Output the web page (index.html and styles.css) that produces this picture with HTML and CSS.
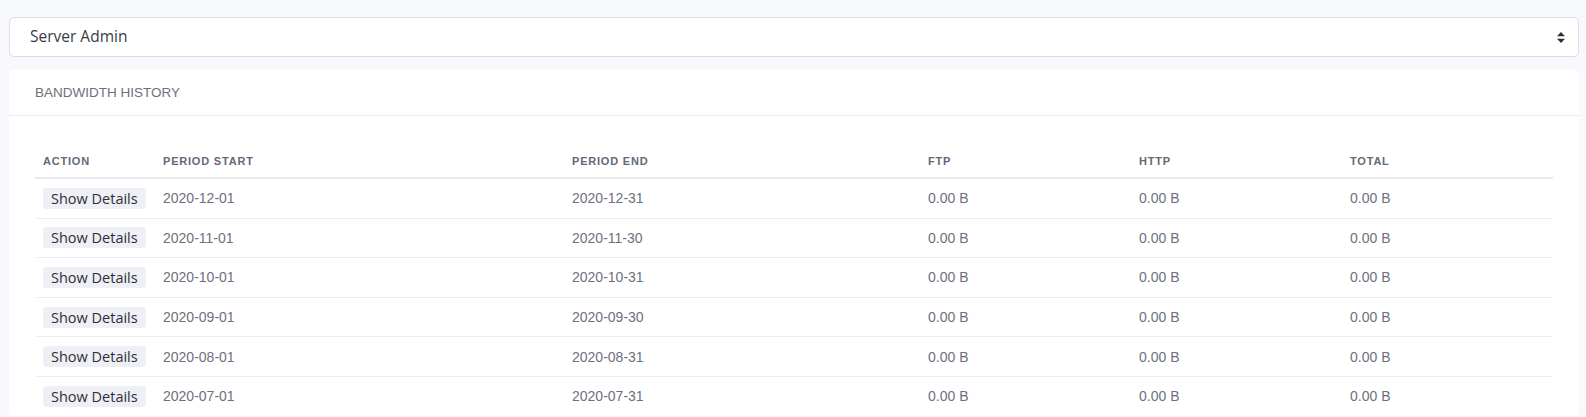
FILE: index.html
```html
<!DOCTYPE html>
<html>
<head>
<meta charset="utf-8">
<link rel="stylesheet" href="styles.css">
</head>
<body>
<div class="page">
  <div class="select">
    <span class="select-text">Server Admin</span>
    <svg class="select-arrow" width="8" height="11" viewBox="0 0 8 11"><path d="M4 0 L8 4.2 H0 Z M4 11 L8 6.8 H0 Z" fill="#2d2f36"/></svg>
  </div>
  <div class="card">
    <div class="card-header">BANDWIDTH HISTORY</div>
    <div class="card-body">
      <table class="table">
        <colgroup>
          <col class="c1"><col class="c2"><col class="c3"><col class="c4"><col class="c5"><col class="c6">
        </colgroup>
        <thead>
          <tr><th>Action</th><th>Period Start</th><th>Period End</th><th>FTP</th><th>HTTP</th><th>Total</th></tr>
        </thead>
        <tbody>
          <tr><td><span class="btn">Show Details</span></td><td>2020-12-01</td><td>2020-12-31</td><td>0.00 B</td><td>0.00 B</td><td>0.00 B</td></tr>
          <tr><td><span class="btn">Show Details</span></td><td>2020-11-01</td><td>2020-11-30</td><td>0.00 B</td><td>0.00 B</td><td>0.00 B</td></tr>
          <tr><td><span class="btn">Show Details</span></td><td>2020-10-01</td><td>2020-10-31</td><td>0.00 B</td><td>0.00 B</td><td>0.00 B</td></tr>
          <tr><td><span class="btn">Show Details</span></td><td>2020-09-01</td><td>2020-09-30</td><td>0.00 B</td><td>0.00 B</td><td>0.00 B</td></tr>
          <tr><td><span class="btn">Show Details</span></td><td>2020-08-01</td><td>2020-08-31</td><td>0.00 B</td><td>0.00 B</td><td>0.00 B</td></tr>
          <tr><td><span class="btn">Show Details</span></td><td>2020-07-01</td><td>2020-07-31</td><td>0.00 B</td><td>0.00 B</td><td>0.00 B</td></tr>
        </tbody>
      </table>
    </div>
  </div>
</div>
</body>
</html>
```
FILE: styles.css
```css
html, body {
  margin: 0;
  padding: 0;
  background: #f8f9fc;
  font-family: "Liberation Sans", Arial, sans-serif;
  overflow: hidden;
}
.page {
  padding: 17px 7px 0 9px;
}
.select {
  height: 38px;
  border: 1px solid #dcdee6;
  border-radius: 5px;
  background: #fff;
  display: flex;
  align-items: center;
  justify-content: space-between;
  padding: 0 13px 0 20px;
}
.select-text {
  font-family: "Open Sans", sans-serif;
  font-size: 15.5px;
  color: #3a3b45;
  margin-top: -2px;
}
.select-arrow {
  display: block;
}
.card {
  margin-top: 13px;
  background: #fff;
  border-radius: 4px;
}
.card-header {
  height: 45px;
  border-bottom: 1px solid #e8eaf0;
  padding: 0 26px;
  display: flex;
  align-items: center;
  font-size: 13.5px;
  color: #6e707e;
}
.card-body {
  padding: 25px 26px 0 26px;
}
.table {
  width: 1518px;
  border-collapse: collapse;
  table-layout: fixed;
}
.c1 { width: 120px; }
.c2 { width: 409px; }
.c3 { width: 356px; }
.c4 { width: 211px; }
.c5 { width: 211px; }
.c6 { width: 211px; }
.table th {
  text-align: left;
  font-size: 11px;
  line-height: 12px;
  font-weight: bold;
  text-transform: uppercase;
  letter-spacing: 0.8px;
  color: #656878;
  padding: 14px 8px 10px 8px;
  border-bottom: 2px solid #e8eaf0;
}
.table td {
  height: 38.6px;
  padding: 0 8px;
  font-size: 14px;
  color: #6e707e;
  border-top: 1px solid #eceef3;
  vertical-align: middle;
}
.table tbody tr:first-child td {
  border-top: none;
}
.btn {
  display: inline-block;
  font-family: "Open Sans", sans-serif;
  font-size: 14.5px;
  line-height: 21px;
  padding: 0 8px;
  background: #eef0f5;
  border-radius: 3px;
  color: #2e2f36;
}
```
